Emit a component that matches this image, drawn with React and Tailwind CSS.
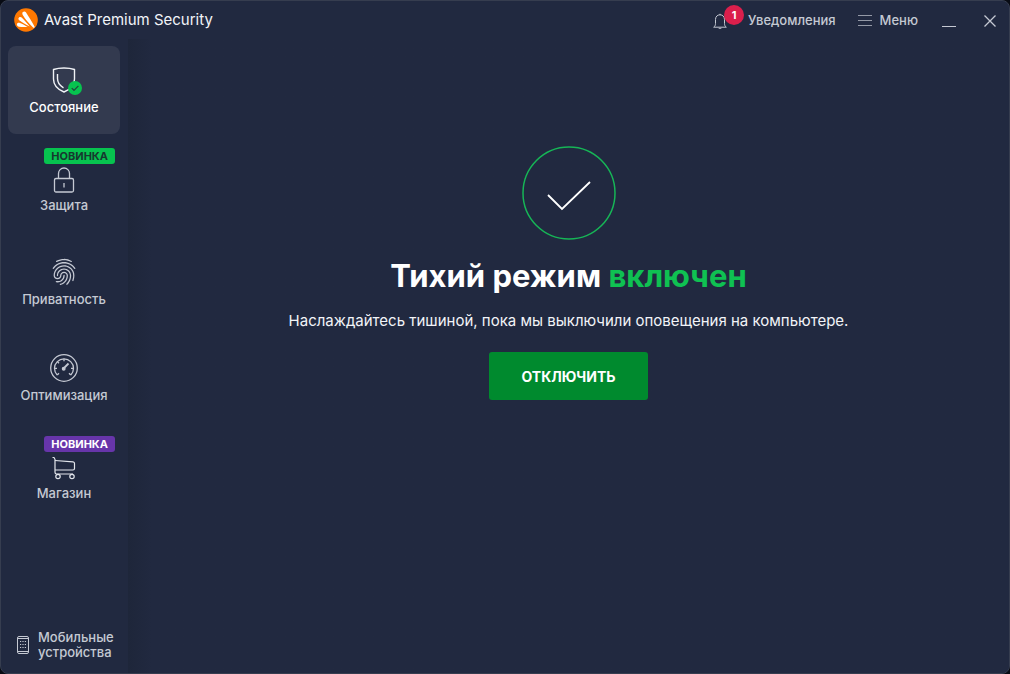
import { useState } from "react";
import { IoFingerPrintOutline } from "react-icons/io5";

const AvastLogo = () => (
  <svg viewBox="0 0 24 24" className="size-6" aria-hidden="true">
    <circle cx="12" cy="12" r="11.8" fill="#ff7800" />
    <g fill="#fff">
      <path d="M8.300 5.200c.1-1.700 2.400-2.500 3.600-1 2.500 4 6 9.300 8.600 14.300.4 1-.5 1.800-1.400 1.100C15 15.800 11.500 11.500 8.900 7.300c-.4-.7-.6-1.400-.6-2.100z" />
      <path d="M4.500 10.300c.6-1.400 2.200-1.600 3.200-.7 2.500 2.500 5.300 5.500 8 9-4-2.300-7.300-4.200-10.100-6.100-.9-.6-1.400-1.400-1.100-2.200z" />
      <path d="M2.900 16.200c.2-1.100 1.300-1.700 2.400-1.400 2.700 1 5.500 2.300 8.300 4.200-3.200.2-6 .2-8.500-.3-1.500-.3-2.400-1.300-2.200-2.500z" />
    </g>
  </svg>
);

const ShieldIcon = () => (
  <span className="relative">
    <svg viewBox="0 0 24 26" className="h-[26px] w-6" fill="none" stroke="#f0f2f6" strokeWidth="1.4">
      <path d="M12 1C8.500 1 4.500 1.500 1.500 2.500V12c0 6 3.500 10.200 10.500 13 7-2.800 10.500-7 10.500-13V2.500C19.500 1.500 15.500 1 12 1z" />
      <path d="M5.500 7v4.500c0 4.300 2 7 6 9.300" />
    </svg>
    <svg viewBox="0 0 14 14" className="absolute -right-1.5 -bottom-0.5 size-[14px]">
      <circle cx="7" cy="7" r="7" fill="#07c34f" />
      <path d="M3.700 7.100l2.300 2.200 4.400-4.400" fill="none" stroke="#23413c" strokeWidth="1.200" />
    </svg>
  </span>
);

const LockIcon = () => (
  <svg viewBox="0 0 22 26" className="h-[26px] w-[22px]" fill="none" stroke="currentColor" strokeWidth="1.300">
    <rect x="1.500" y="11.500" width="19" height="13.500" rx="1.500" />
    <path d="M5.500 11.500V6.500a5.500 5.500 0 0 1 11 0v5M11 16v4.500" />
  </svg>
);

const GaugeIcon = () => (
  <svg viewBox="0 0 28 28" className="size-7" fill="none" stroke="currentColor" strokeWidth="1.300">
    <circle cx="14" cy="14" r="13.300" />
    <path d="M7.200 21A9.500 9.500 0 1 1 20.800 21" />
    <path d="M7.200 21l1.800-1.800M20.800 21L19 19.200M4.500 14.300H7M21 14.300h2.500M7.300 7.500L9 9.200M14 4.800v2.500" />
    <path d="M14.500 13.500l4-4" strokeWidth="1.800" />
    <circle cx="13.700" cy="14.800" r="1.300" fill="currentColor" />
  </svg>
);

const CartIcon = () => (
  <svg viewBox="0 0 24 24" className="size-6" fill="none" stroke="#e3e6ec" strokeWidth="1.200">
    <path d="M.5 1.500h1.500l1 1.800v13c0 1.200.5 1.700 1.500 1.700H21" />
    <path d="M3 4.500l18 1.300c1 .1 1.500.6 1.500 1.500v5.200c0 1-.5 1.500-1.500 1.500H3" />
    <circle cx="6" cy="20.500" r="2.200" />
    <circle cx="20" cy="20.500" r="2.200" />
  </svg>
);

const MobileIcon = () => (
  <svg viewBox="0 0 12 18" className="h-[18px] w-3" fill="none" stroke="currentColor">
    <rect x=".5" y=".5" width="11" height="17" rx="1.500" />
    <path d="M1 2.500h10M1 15.500h10" />
    <path d="M3 5.500h6M3 8.500h6M3 11.500h6" strokeDasharray="1.200 1.200" />
  </svg>
);

const BellIcon = () => (
  <svg viewBox="0 0 14 17" className="h-[17px] w-[14px]" fill="none" stroke="currentColor">
    <path d="M7 .8v1M.7 14.200h12.600c-1.300-1-1.800-2-1.800-3.700V6.500C11.500 3.500 9.500 1.800 7 1.800S2.500 3.500 2.500 6.500v4c0 1.700-.5 2.700-1.800 3.700z" />
    <path d="M5.500 15.200c.3 1.200 2.700 1.200 3 0z" fill="currentColor" stroke="none" />
  </svg>
);

const items = [
  { id: "status", label: "Состояние", icon: <ShieldIcon /> },
  { id: "protection", label: "Защита", icon: <LockIcon />, badge: "bg-[#07c34f] text-[#17382f]" },
  { id: "privacy", label: "Приватность", icon: <IoFingerPrintOutline size={28} className="-scale-x-100" /> },
  { id: "performance", label: "Оптимизация", icon: <GaugeIcon /> },
  { id: "store", label: "Магазин", icon: <CartIcon />, badge: "bg-[#6735aa] text-white" },
];

const NavItem = ({ item, isActive, onSelect }) => (
  <button
    type="button"
    onClick={onSelect}
    className={`flex h-[88px] w-full flex-col items-center rounded-lg ${
      isActive ? "bg-[#333a4f] text-white" : "text-[#c5c9d3]"
    }`}
  >
    {item.badge ? (
      <span className={`mt-1.5 mr-[5px] h-4 self-end rounded-[3px] px-[7px] text-[11px] leading-4 font-bold ${item.badge}`}>
        НОВИНКА
      </span>
    ) : (
      <span className="h-4" />
    )}
    <span className={`flex items-center justify-center ${item.badge ? "h-8" : "h-9"}`}>{item.icon}</span>
    <span className="text-[13px] leading-[18px] font-medium">{item.label}</span>
  </button>
);

const TitleBar = () => (
  <header className="flex h-[38px] items-center justify-between pr-[13px] pl-[13px] text-[13px] font-medium text-[#c5c9d3]">
    <div className="flex items-center gap-1.5">
      <AvastLogo />
      <h1 className="text-[15px] font-normal text-[#f2f4f8]">Avast Premium Security</h1>
    </div>
    <div className="flex items-center">
      <button type="button" className="relative flex items-center gap-[21px] pt-0.5">
        <BellIcon />
        <span className="absolute -top-1 left-[11px] size-5 rounded-full bg-[#db1f4c] text-center text-[11px] leading-5 font-bold text-white">
          1
        </span>
        Уведомления
      </button>
      <button type="button" className="ml-[22px] flex items-center gap-2 pt-0.5">
        <svg viewBox="0 0 14 12" className="h-3 w-[14px]" stroke="#9499a6">
          <path d="M0 .5h14M0 5.500h14M0 10.500h14" />
        </svg>
        Меню
      </button>
      <button type="button" aria-label="Свернуть" className="ml-6">
        <svg viewBox="0 0 14 14" className="mt-0.5 size-3.5" stroke="currentColor">
          <path d="M0 12.500h14" />
        </svg>
      </button>
      <button type="button" aria-label="Закрыть" className="ml-7">
        <svg viewBox="0 0 12 12" className="mt-0.5 size-3" stroke="currentColor" strokeWidth="1.300">
          <path d="M.5.5l11 11M11.500.5l-11 11" />
        </svg>
      </button>
    </div>
  </header>
);

const Sidebar = () => {
  const [active, setActive] = useState("status");

  return (
    <aside className="flex w-[127px] shrink-0 flex-col pt-[7px] pr-2 pl-[7px]">
      <nav className="flex flex-col gap-2">
        {items.map((item) => (
          <NavItem
            key={item.id}
            item={item}
            isActive={active === item.id}
            onSelect={() => setActive(item.id)}
          />
        ))}
      </nav>
      <button type="button" className="mt-auto mb-[13px] flex items-center gap-[9px] pl-[9px] text-left text-[13px] leading-[15px] font-medium text-[#c5c9d3]">
        <MobileIcon />
        <span>
          Мобильные
          <br />
          устройства
        </span>
      </button>
    </aside>
  );
};

const SilentMode = () => (
  <main className="flex flex-1 flex-col items-center bg-linear-to-r from-[#1e263a] to-[#212940] to-[24px] pt-[107px] text-center">
    <svg viewBox="0 0 94 94" className="size-[94px]" fill="none">
      <circle cx="47" cy="47" r="46" stroke="#16b556" strokeWidth="1.500" />
      <path d="M26 49l14 14 28-27" stroke="#fff" strokeWidth="1.800" />
    </svg>
    <h2 className="mt-4 text-[31px] leading-10 font-bold text-white">
      Тихий режим <span className="text-[#0fc152]">включен</span>
    </h2>
    <p className="mt-[15px] text-[15px] leading-5 text-[#f2f4f8]">
      Наслаждайтесь тишиной, пока мы выключили оповещения на компьютере.
    </p>
    <button type="button" className="mt-[21px] h-12 rounded-[3px] bg-[#008a2e] px-8 text-[14px] font-bold text-white">
      ОТКЛЮЧИТЬ
    </button>
  </main>
);

export default function App() {
  return (
    <div className="flex min-h-screen bg-[#080b14] font-['Inter','Open_Sans',sans-serif]">
      <div className="flex flex-1 flex-col overflow-hidden rounded-lg border border-[#363d4f] bg-[#212940]">
        <TitleBar />
        <div className="flex flex-1">
          <Sidebar />
          <SilentMode />
        </div>
      </div>
    </div>
  );
}
